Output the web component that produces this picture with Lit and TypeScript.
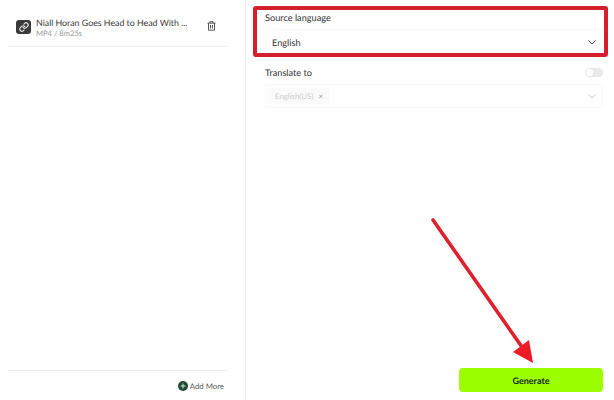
import { LitElement, html, css, svg } from "lit";
import { customElement } from "lit/decorators.js";

const chevron = (color: string) => html`<svg class="chev" width="8" height="5" viewBox="0 0 8 5" fill="none"><path d="M.7.7L4 4l3.3-3.3" stroke=${color} stroke-width="1" stroke-linecap="round" stroke-linejoin="round"/></svg>`;

@customElement("app-root")
export class AppRoot extends LitElement {
  static styles = css`
    :host { display: flex; position: relative; width: 614px; height: 400px; background: #fff; overflow: hidden; font-family: Lato, "Noto Sans", sans-serif; color: #2b2b2b; text-rendering: geometricPrecision; }
    .left { width: 246px; flex: none; box-sizing: border-box; border-right: 1px solid #f0f0f0; padding: 0 18px 0 8px; display: flex; flex-direction: column; height: 400px; }
    .item { height: 47px; box-sizing: border-box; border-bottom: 1px solid #f1f1f1; display: flex; align-items: flex-start; padding: 17px 0 0 8px; }
    .thumb { width: 15px; height: 14px; border-radius: 3px; background: #3a3a3a; margin: 3px 5px 0 0; display: flex; align-items: center; justify-content: center; flex: none; }
    .meta { width: 171px; flex: none; }
    .title { font-size: 8.8px; line-height: 11px; color: #3a3a3a; white-space: nowrap; }
    .sub { font-size: 7.6px; line-height: 10px; margin-top: 0; color: #9a9a9a; }
    .trash { margin: 4px 0 0 0; flex: none; }
    .spacer { flex: 1; }
    .foot { height: 30px; box-sizing: border-box; border-top: 1px solid #f0f0f0; display: flex; align-items: center; justify-content: flex-end; gap: 2px; padding: 0 3px 0 0; font-size: 7.8px; color: #555; }
    .plus { width: 10px; height: 10px; border-radius: 50%; background: #1f4a33; display: flex; align-items: center; justify-content: center; }
    .right { flex: 1; box-sizing: border-box; padding: 12px 11px 8px 19px; display: flex; flex-direction: column; height: 400px; }
    .label { font-size: 9.2px; line-height: 12px; color: #333; }
    .select { height: 24px; box-sizing: border-box; margin: 6px 0 0 0; padding: 0 6px; display: flex; align-items: center; justify-content: space-between; font-size: 9.2px; color: #333; border-radius: 4px; border: 1px solid #f8f8f8; }
    .row { display: flex; align-items: center; justify-content: space-between; margin-top: 13px; }
    .toggle { width: 18px; height: 9px; border-radius: 5px; background: #e9e9e9; position: relative; margin-bottom: 2px; }
    .toggle::after { content: ""; position: absolute; left: 1px; top: 1px; width: 7px; height: 7px; border-radius: 50%; background: #fff; }
    .select.off { margin-top: 5px; color: #c0c0c0; }
    .tag { display: flex; align-items: center; gap: 5px; height: 16px; padding: 0 6px 0 8px; margin-left: -5px; background: #fafafa; border-radius: 2px; font-size: 7.8px; color: #cccccc; }
    .x { font-size: 8px; color: #999; line-height: 8px; }
    .btnwrap { margin-top: auto; display: flex; justify-content: flex-end; }
    .btn { width: 144px; height: 24px; border: 0; border-radius: 4px; background: #9cff00; font: 700 9px Lato, sans-serif; color: #16260a; padding: 0; text-rendering: geometricPrecision; }
    .annot { position: absolute; inset: 0; pointer-events: none; }
  `;

  render() {
    return html`
      <div class="left">
        <div class="item">
          <div class="thumb">
            <svg width="10" height="10" viewBox="0 0 24 24" fill="none" stroke="#e4e4e4" stroke-width="2.8" stroke-linecap="round" stroke-linejoin="round"><path d="M10 13a5 5 0 0 0 7.54.54l3-3a5 5 0 0 0-7.07-7.07l-1.72 1.71"/><path d="M14 11a5 5 0 0 0-7.54-.54l-3 3a5 5 0 0 0 7.07 7.07l1.71-1.71"/></svg>
          </div>
          <div class="meta">
            <div class="title">Niall Horan Goes Head to Head With ...</div>
            <div class="sub">MP4 / 8m25s</div>
          </div>
          <svg class="trash" width="9" height="10" viewBox="0 0 9 10" fill="none" stroke="#444" stroke-width="0.9"><path d="M.5 2.2h8M3 2V.7h3V2M1.5 2.2v7h6v-7M3.5 4v3.5M5.5 4v3.5"/></svg>
        </div>
        <div class="spacer"></div>
        <div class="foot">
          <span class="plus"><svg width="6" height="6" viewBox="0 0 6 6" stroke="#cfe8d8" stroke-width="1"><path d="M3 .5v5M.5 3h5"/></svg></span>
          <span>Add More</span>
        </div>
      </div>
      <div class="right">
        <div class="label">Source language</div>
        <div class="select"><span>English</span>${chevron("#444")}</div>
        <div class="row"><span class="label">Translate to</span><span class="toggle"></span></div>
        <div class="select off"><span class="tag">English(US) <span class="x">×</span></span>${chevron("#c8c8c8")}</div>
        <div class="btnwrap"><button class="btn">Generate</button></div>
      </div>
      <svg class="annot" width="614" height="400" viewBox="0 0 614 400" fill="none">
        ${svg`<rect x="255" y="8" width="351" height="47" stroke="#d4202c" stroke-width="4" rx="1"/>
        <path d="M433 220L522 347" stroke="#e0202c" stroke-width="3.6" stroke-linecap="round"/>
        <path d="M533 363L513 352L529 340Z" fill="#ed1c24"/>`}
      </svg>
    `;
  }
}
